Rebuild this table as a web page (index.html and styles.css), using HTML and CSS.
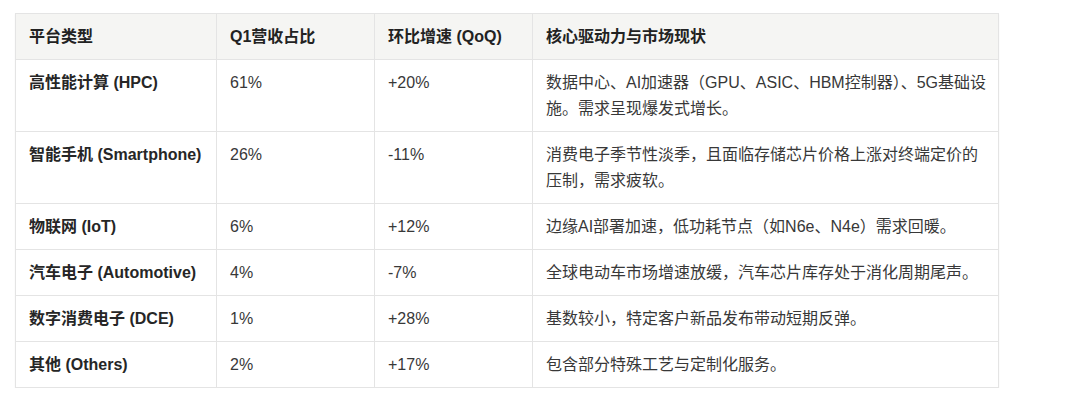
FILE: index.html
```html
<!DOCTYPE html>
<html lang="zh-CN">
<head>
<meta charset="utf-8">
<title>平台营收占比</title>
<link rel="stylesheet" href="styles.css">
</head>
<body>
<div class="page">
  <table class="data">
    <colgroup>
      <col class="c1"><col class="c2"><col class="c3"><col class="c4">
    </colgroup>
    <thead>
      <tr><th>平台类型</th><th>Q1营收占比</th><th>环比增速 (QoQ)</th><th>核心驱动力与市场现状</th></tr>
    </thead>
    <tbody>
      <tr><td class="name">高性能计算 (HPC)</td><td>61%</td><td>+20%</td><td class="desc">数据中心、AI加速器（GPU、ASIC、HBM控制器）、5G基础设施。需求呈现爆发式增长。</td></tr>
      <tr><td class="name">智能手机 (Smartphone)</td><td>26%</td><td>-11%</td><td class="desc">消费电子季节性淡季，且面临存储芯片价格上涨对终端定价的压制，需求疲软。</td></tr>
      <tr><td class="name">物联网 (IoT)</td><td>6%</td><td>+12%</td><td class="desc">边缘AI部署加速，低功耗节点（如N6e、N4e）需求回暖。</td></tr>
      <tr><td class="name">汽车电子 (Automotive)</td><td>4%</td><td>-7%</td><td class="desc">全球电动车市场增速放缓，汽车芯片库存处于消化周期尾声。</td></tr>
      <tr><td class="name">数字消费电子 (DCE)</td><td>1%</td><td>+28%</td><td class="desc">基数较小，特定客户新品发布带动短期反弹。</td></tr>
      <tr><td class="name">其他 (Others)</td><td>2%</td><td>+17%</td><td class="desc">包含部分特殊工艺与定制化服务。</td></tr>
    </tbody>
  </table>
</div>
</body>
</html>
```

FILE: styles.css
```css
html, body {
  margin: 0;
  padding: 0;
  background: #ffffff;
}
body {
  font-family: "Liberation Sans", "Noto Sans CJK SC", sans-serif;
  font-size: 16px;
  color: #383838;
}
.page {
  padding: 13px 0 0 15px;
}
.data {
  border-collapse: collapse;
  table-layout: fixed;
  width: 983px;
  box-shadow: 0 1px 2px rgba(0, 0, 0, 0.04);
}
.c1 { width: 201px; }
.c2 { width: 158px; }
.c3 { width: 158px; }
.c4 { width: 466px; }
.data th,
.data td {
  border: 1px solid #e4e4e4;
  padding: 9.5px 13px;
  line-height: 26px;
  text-align: left;
  vertical-align: top;
}
.data td.desc {
  padding-right: 8px;
}
.data th {
  background: #f5f5f3;
  font-weight: 700;
  color: #222222;
}
.data td.name {
  font-weight: 700;
  color: #262626;
}
```
